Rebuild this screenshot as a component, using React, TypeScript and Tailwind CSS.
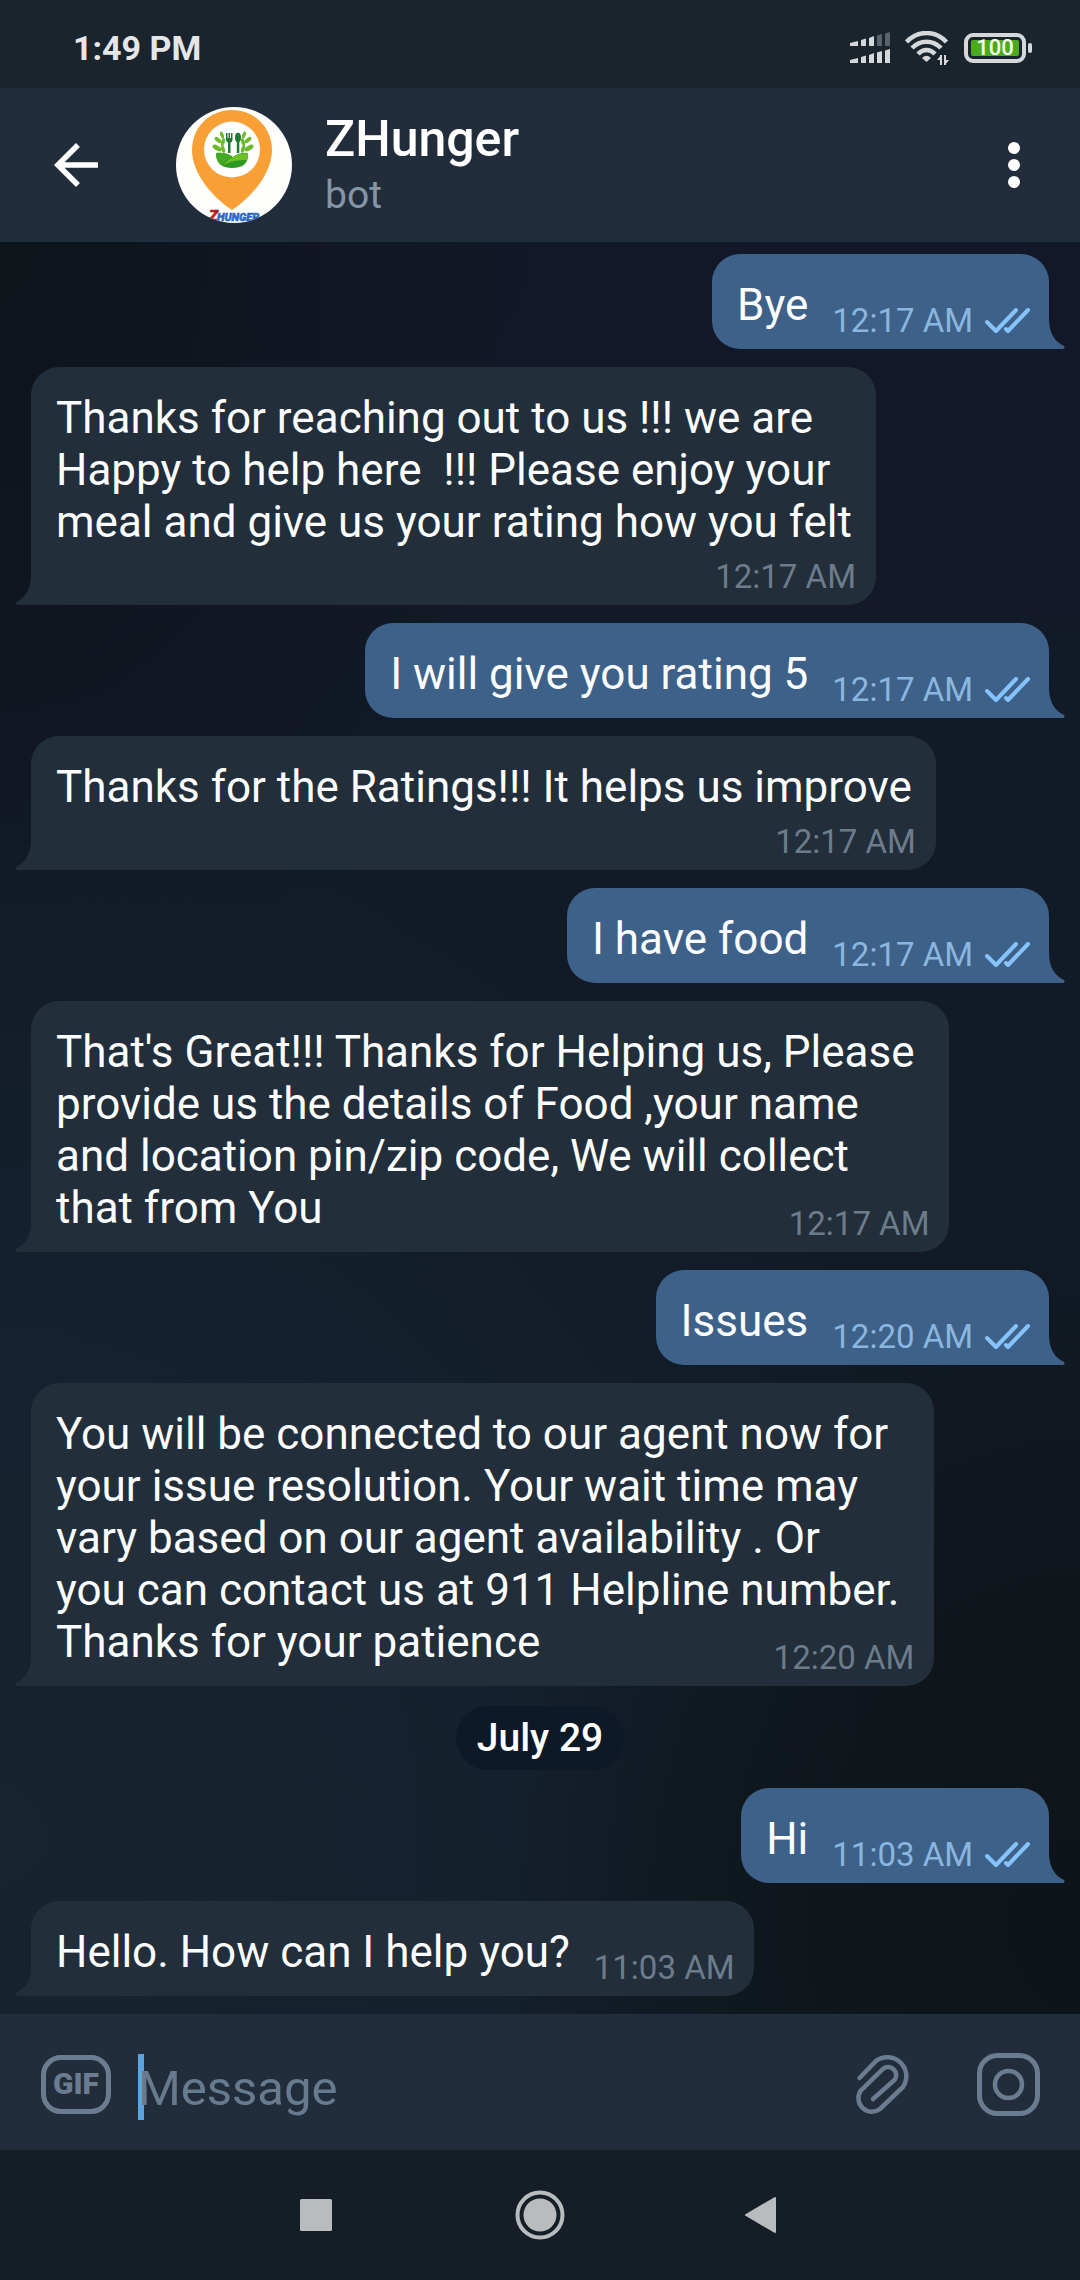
import React from "react";

type Placement = "inline" | "below";

interface Message {
  kind: "in" | "out";
  text: string;
  time: string;
  placement: Placement;
}

const earlier: Message[] = [
  { kind: "out", text: "Bye", time: "12:17 AM", placement: "inline" },
  {
    kind: "in",
    text: "Thanks for reaching out to us !!! we are\nHappy to help here  !!! Please enjoy your\nmeal and give us your rating how you felt",
    time: "12:17 AM",
    placement: "below",
  },
  { kind: "out", text: "I will give you rating 5", time: "12:17 AM", placement: "inline" },
  { kind: "in", text: "Thanks for the Ratings!!! It helps us improve", time: "12:17 AM", placement: "below" },
  { kind: "out", text: "I have food", time: "12:17 AM", placement: "inline" },
  {
    kind: "in",
    text: "That's Great!!! Thanks for Helping us, Please\u00a0\nprovide us the details of Food ,your name\nand location pin/zip code, We will collect\nthat from You",
    time: "12:17 AM",
    placement: "inline",
  },
  { kind: "out", text: "Issues", time: "12:20 AM", placement: "inline" },
  {
    kind: "in",
    text: "You will be connected to our agent now for\nyour issue resolution. Your wait time may\nvary based on our agent availability . Or\nyou can contact us at 911 Helpline number.\u00a0\nThanks for your patience",
    time: "12:20 AM",
    placement: "inline",
  },
];

const later: Message[] = [
  { kind: "out", text: "Hi", time: "11:03 AM", placement: "inline" },
  { kind: "in", text: "Hello. How can I help you?", time: "11:03 AM", placement: "inline" },
];

function DoubleCheck() {
  return (
    <svg width="46" height="26" viewBox="0 0 46 26" fill="none" stroke="#86c3fb" strokeWidth="4" strokeLinecap="round" strokeLinejoin="round" role="img" aria-label="Read">
      <path d="M2 14 L11 23 L31 2" />
      <path d="M21 21 L23 23 L43 2" />
    </svg>
  );
}

function Tail({ side }: { side: "left" | "right" }) {
  return side === "right" ? (
    <svg className="shrink-0 fill-[#3e6189]" width="16" height="30" viewBox="0 0 16 30" aria-hidden="true">
      <path d="M0 0 C0 14 6 23 15 27 Q16.500 28.500 14.500 30 L0 30 Z" />
    </svg>
  ) : (
    <svg className="shrink-0 fill-[#222e3a]" width="16" height="30" viewBox="0 0 16 30" aria-hidden="true">
      <path d="M16 0 C16 14 10 23 1 27 Q-0.500 28.500 1.500 30 L16 30 Z" />
    </svg>
  );
}

function Meta({ message, className = "" }: { message: Message; className?: string }) {
  const out = message.kind === "out";
  return (
    <div className={`flex items-center gap-3 ${className}`}>
      <time className={`text-[33px] leading-10 whitespace-nowrap ${out ? "text-[#8ab6df]" : "text-[#6d7c8a]"}`}>{message.time}</time>
      {out && <DoubleCheck />}
    </div>
  );
}

function Bubble({ message }: { message: Message }) {
  const out = message.kind === "out";
  const textClass = "text-[44px] leading-[52px] whitespace-pre-wrap text-[#fbfcfd]";
  const split = message.text.lastIndexOf("\n");
  const upper = message.text.slice(0, Math.max(split, 0));
  const lastLine = message.text.slice(split + 1);
  return (
    <li className={`flex items-end ${out ? "justify-end" : "justify-start"}`}>
      {!out && <Tail side="left" />}
      <div className={`rounded-t-[28px] pt-[25px] pb-2 pl-[25px] ${out ? "rounded-bl-[28px] bg-[#3e6189]" : "rounded-br-[28px] bg-[#222e3a]"}`}>
        {message.placement === "inline" ? (
          <>
            {upper && <p className={`pr-6 ${textClass}`}>{upper}</p>}
            <div className={`flex items-end justify-between gap-6 ${out ? "pr-[18px]" : "pr-5"}`}>
              <p className={`mb-2.5 ${textClass}`}>{lastLine}</p>
              <Meta message={message} />
            </div>
          </>
        ) : (
          <div className="flex flex-col">
            <p className={`pr-6 ${textClass}`}>{message.text}</p>
            <Meta message={message} className="mt-[9px] self-end pr-5" />
          </div>
        )}
      </div>
      {out && <Tail side="right" />}
    </li>
  );
}

function StatusBar() {
  return (
    <div className="flex h-[88px] items-center justify-between bg-[#1a242d] pt-2 pr-12 pl-[73px]">
      <span className="text-[34px] leading-10 font-bold text-[#e4e6e8]">1:49 PM</span>
      <div className="flex items-center gap-[15px]">
        <svg width="40" height="32" viewBox="0 0 40 32" fill="#d5d8da" aria-hidden="true">
          <path d="M0 11 L8 9 V14 H0 Z" />
          <path d="M11 8 L16 6.500 V14 H11 Z" />
          <path d="M19 6 L24 4 V14 H19 Z" />
          <path fill="#5a636b" d="M27 3.500 L32 2 V14 H27 Z" />
          <path fill="#5a636b" d="M35 1.500 L40 0 V14 H35 Z" />
          <path d="M0 28 L8 26 V31 H0 Z" />
          <path d="M11 25 L16 23.500 V31 H11 Z" />
          <path d="M19 23 L24 21 V31 H19 Z" />
          <path d="M27 20.500 L32 19 V31 H27 Z" />
          <path d="M35 18.500 L40 17 V31 H35 Z" />
        </svg>
        <svg width="44" height="34" viewBox="0 0 44 34" fill="none" stroke="#d5d8da" strokeWidth="4.500" aria-hidden="true">
          <path d="M1.500 11 C13 -1 30 -1 41.500 11" />
          <path d="M7 17 C15 8.500 28 8.500 36 17" />
          <path d="M13 23 C18 17.500 25 17.500 30 23" />
          <path stroke="none" fill="#d5d8da" d="M17 27 Q21.500 22.500 26 27 L21.500 31 Z" />
          <path strokeWidth="2" d="M36 24 V34 M40 24 V34" />
          <path stroke="none" fill="#d5d8da" d="M32 29 L36 24 V29 Z M44 29 L40 34 V29 Z" />
        </svg>
        <div className="flex items-center gap-0.5">
          <div className="flex h-[30px] w-[62px] rounded-[9px] border-4 border-[#d5d8da] p-[3px]">
            <span className="flex flex-1 items-center justify-center rounded-xs bg-[#4cab1c] text-[22px] leading-4 font-medium text-[#f4fbef]">100</span>
          </div>
          <span className="h-[10px] w-1 rounded-full bg-[#d5d8da]" />
        </div>
      </div>
    </div>
  );
}

function Avatar() {
  return (
    <svg className="size-[116px] shrink-0 rounded-full bg-[#fefefd]" viewBox="0 0 116 116" role="img" aria-label="ZHunger">
      <path fill="#f8a035" d="M56 3 C78 3 96 20 96 43 C96 66 76 90 56 103 C36 90 16 66 16 43 C16 20 34 3 56 3 Z" />
      <circle cx="56" cy="42.500" r="28" fill="#fefefd" />
      <g fill="#1e7a35">
        <path d="M50 26 h1.500 v5 h1 v-5 h1.500 v5 h1 v-5 h1.500 v7 q0 2 -2 2.500 V46 h-2.500 V35.500 q-2 -.5 -2 -2.500 Z" />
        <ellipse cx="62" cy="30.500" rx="3" ry="4.800" />
        <rect x="60.800" y="34" width="2.500" height="12" />
      </g>
      <g fill="#6cbb2b">
        <ellipse cx="46" cy="28" rx="1.800" ry="3.500" transform="rotate(-20 46 28)" />
        <ellipse cx="42" cy="33" rx="2" ry="4" transform="rotate(-50 42 33)" />
        <ellipse cx="47" cy="35" rx="1.800" ry="4" transform="rotate(15 47 35)" />
        <ellipse cx="41" cy="41" rx="2.400" ry="5" transform="rotate(-60 41 41)" />
        <ellipse cx="47" cy="42" rx="1.800" ry="4" transform="rotate(-15 47 42)" />
        <ellipse cx="68" cy="28" rx="1.800" ry="3.500" transform="rotate(20 68 28)" />
        <ellipse cx="72" cy="33" rx="2" ry="4" transform="rotate(50 72 33)" />
        <ellipse cx="67" cy="35" rx="1.800" ry="4" transform="rotate(-15 67 35)" />
        <ellipse cx="73" cy="41" rx="2.400" ry="5" transform="rotate(60 73 41)" />
        <ellipse cx="67" cy="42" rx="1.800" ry="4" transform="rotate(15 67 42)" />
      </g>
      <path fill="#2f9a22" d="M39 46 Q49 45 56 50 Q63 45 71 46 Q72 61 55 61 Q39 61 39 46 Z" transform="translate(1 0)" />
      <path fill="#6cc224" d="M72 46 Q57 46 46 59 Q56 52 71 53 Q72 50 72 46 Z" />
      <path fill="#43a823" d="M40 46 Q50 45 56 50 Q49 53 45 58 Q40 54 40 46 Z" />
      <text x="33" y="114" fontSize="15" fontWeight="900" fontStyle="italic" fill="#e02326" stroke="#7c1414" strokeWidth="0.500" fontFamily="Roboto, sans-serif">Z</text>
      <text x="41" y="114" fontSize="11" fontWeight="900" fontStyle="italic" fill="#2b78e0" stroke="#2457a8" strokeWidth="0.500" fontFamily="Roboto, sans-serif">HUNGER</text>
    </svg>
  );
}

function Header() {
  return (
    <header className="flex h-[154px] items-center bg-[#212d3b] pr-8 pl-[43px]">
      <button type="button" aria-label="Back" className="shrink-0">
        <svg width="66" height="66" viewBox="0 0 24 24" fill="#ffffff">
          <path d="M20 11H7.830l5.590-5.590L12 4l-8 8 8 8 1.410-1.410L7.830 13H20v-2z" />
        </svg>
      </button>
      <div className="ml-[67px] flex min-w-0 flex-1 items-center gap-[33px]">
        <Avatar />
        <div className="min-w-0">
          <h1 className="text-[50px] leading-[60px] font-medium text-white">ZHunger</h1>
          <p className="text-[39px] leading-[52px] text-[#8595a5]">bot</p>
        </div>
      </div>
      <button type="button" aria-label="More options" className="shrink-0">
        <svg width="68" height="68" viewBox="0 0 68 68" fill="#ffffff">
          <circle cx="34" cy="17" r="6" />
          <circle cx="34" cy="34" r="6" />
          <circle cx="34" cy="51" r="6" />
        </svg>
      </button>
    </header>
  );
}

function Composer() {
  return (
    <form className="flex h-[136px] items-center bg-[#212d3a] pt-1 pr-10 pl-[41px]" onSubmit={(e) => e.preventDefault()}>
      <button type="button" aria-label="GIF" className="h-[59px] w-[70px] shrink-0 rounded-[20px] border-[5px] border-[#6b7c90] text-[30px] leading-none font-black text-[#6b7c90]">
        GIF
      </button>
      <div className="ml-[27px] flex min-w-0 flex-1 items-center pt-1.5">
        <span className="h-[66px] w-1.5 shrink-0 bg-[#5aa4df]" />
        <input
          type="text"
          aria-label="Message"
          placeholder="Message"
          className="-ml-1.5 h-[66px] min-w-0 flex-1 bg-transparent pt-1 text-[49px] text-white outline-none placeholder:text-[#687a8d]"
        />
      </div>
      <div className="flex shrink-0 items-center gap-[66px]">
        <button type="button" aria-label="Attach">
          <svg width="56" height="64" viewBox="0 0 56 64" fill="none" stroke="#6b7c90" strokeWidth="4.500" strokeLinecap="round">
            <path d="M4.500 26 L21 9 A19 19 0 0 1 48 35 L25 57 A13.500 13.500 0 0 1 5.500 39 L28 17 A8 8 0 0 1 39.500 28 L18 47" />
          </svg>
        </button>
        <button type="button" aria-label="Camera">
          <svg width="63" height="63" viewBox="0 0 63 63" fill="none" stroke="#6b7c90" strokeWidth="5">
            <rect x="2.500" y="2.500" width="58" height="58" rx="18" />
            <circle cx="31.500" cy="31.500" r="13.500" strokeWidth="4.500" />
          </svg>
        </button>
      </div>
    </form>
  );
}

function SystemNav() {
  return (
    <nav aria-label="System" className="flex h-[130px] items-center justify-center gap-[174px] bg-[#151d26]">
      <button type="button" aria-label="Recent apps">
        <svg width="50" height="50" viewBox="0 0 50 50" fill="#b9bcbf">
          <rect x="9" y="9" width="32" height="32" rx="1.500" />
        </svg>
      </button>
      <button type="button" aria-label="Home">
        <svg width="50" height="50" viewBox="0 0 50 50" fill="#b9bcbf">
          <circle cx="25" cy="25" r="16.500" />
          <circle cx="25" cy="25" r="22.500" fill="none" stroke="#b9bcbf" strokeWidth="4" />
        </svg>
      </button>
      <button type="button" aria-label="Back to previous app">
        <svg width="50" height="50" viewBox="0 0 50 50" fill="#b9bcbf" stroke="#b9bcbf" strokeWidth="2" strokeLinejoin="round">
          <path d="M7 25 L36 8 V42 Z" />
        </svg>
      </button>
    </nav>
  );
}

export default function App() {
  return (
    <div className="flex min-h-screen flex-col font-['Roboto',sans-serif]">
      <StatusBar />
      <Header />
      <main className="flex-1 bg-[#131b28] bg-[radial-gradient(ellipse_55%_40%_at_100%_95%,#0d1419_0%,#0e151bdd_50%,#0e151b00_100%),radial-gradient(ellipse_90%_60%_at_0%_90%,#162430_0%,#152330cc_50%,#15233000_100%),radial-gradient(ellipse_50%_45%_at_0%_0%,#0d141a_0%,#0e151b00_100%),linear-gradient(180deg,#131828_0%,#121a27_40%,#121a24_100%)] px-[15px] pt-3 pb-[17px]">
        <ul className="flex flex-col gap-[18px]">
          {earlier.map((m) => (
            <Bubble key={m.text} message={m} />
          ))}
        </ul>
        <div className="mt-5 mb-[18px] flex justify-center">
          <span className="rounded-full bg-[#0d1926] px-[21px] py-3 text-[39px] leading-10 font-medium text-white">July 29</span>
        </div>
        <ul className="flex flex-col gap-[18px]">
          {later.map((m) => (
            <Bubble key={m.text} message={m} />
          ))}
        </ul>
      </main>
      <Composer />
      <SystemNav />
    </div>
  );
}
